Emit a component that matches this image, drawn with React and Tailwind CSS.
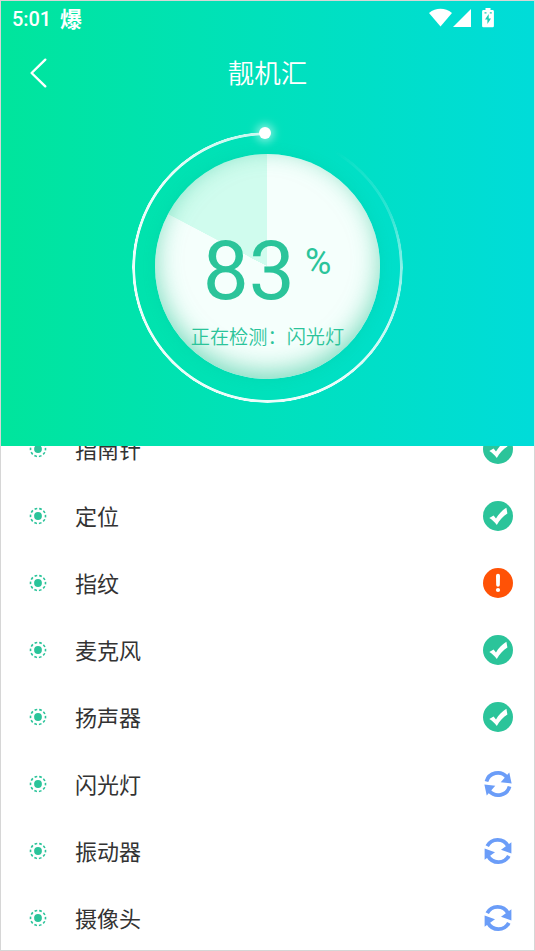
const items = [
    { name: "指南针", status: "ok" },
    { name: "定位", status: "ok" },
    { name: "指纹", status: "error" },
    { name: "麦克风", status: "ok" },
    { name: "扬声器", status: "ok" },
    { name: "闪光灯", status: "pending", angle: -12 },
    { name: "振动器", status: "pending", angle: 0 },
    { name: "摄像头", status: "pending", angle: 0 },
];

const StatusIcon = ({ status, angle }) => {
    if (status === "ok") {
        return (
            <svg viewBox="0 0 30 30" className="w-[30px] h-[30px]">
                <circle cx="15" cy="15" r="15" fill="#2bc49a" />
                <path d="M6.3 17 L10.6 14.6 L13 17.4 C15.5 13.3 19 9.3 23.4 6.8 L24.4 12.4 C20 15 16.5 19 13.8 24 C11.5 21 9 18.5 6.3 17 Z" fill="#fff" />
            </svg>
        );
    }
    if (status === "error") {
        return (
            <svg viewBox="0 0 30 30" className="w-[30px] h-[30px]">
                <circle cx="15" cy="15" r="15" fill="#ff5206" />
                <path d="M13 7.8 a2 2 0 0 1 4 0 L16.8 17 a1.8 1.8 0 0 1 -3.6 0 Z" fill="#fff" />
                <circle cx="15" cy="22" r="2.1" fill="#fff" />
            </svg>
        );
    }
    return (
        <svg viewBox="0 0 30 30" className="w-[30px] h-[30px]">
            <g transform={`rotate(${angle} 15 15)`}>
                <path d="M4.2 10.2 A11.8 11.8 0 0 1 25 10" fill="none" stroke="#6b9df8" strokeWidth="3.8" />
                <path d="M28.4 6.2 L28.4 17.4 L18 13.8 Z" fill="#6b9df8" />
                <path d="M25.8 19.8 A11.8 11.8 0 0 1 5 20" fill="none" stroke="#6b9df8" strokeWidth="3.8" />
                <path d="M1.6 23.8 L1.6 12.6 L12 16.2 Z" fill="#6b9df8" />
            </g>
        </svg>
    );
};

const Bullet = () => (
    <svg viewBox="0 0 18 18" className="w-[18px] h-[18px]">
        <circle cx="9" cy="9" r="3.9" fill="#2bc49a" />
        <circle cx="9" cy="9" r="7.5" fill="none" stroke="#2bc49a" strokeWidth="1.6" strokeDasharray="2.7 2.01" strokeDashoffset="1.35" />
    </svg>
);

const StatusBar = () => (
    <div className="flex items-center h-[34px] pl-3 pr-10 text-white">
        <span className="-ml-[1px] mt-[2px] font-['Roboto',sans-serif] text-[20px] leading-none font-medium tracking-[-0.1px]">5:01</span>
        <span className="ml-[9px] -mt-[2px] font-['Noto_Sans_CJK_SC',sans-serif] text-[22px] leading-none font-bold">爆</span>
        <svg viewBox="0 0 24 20" className="ml-auto w-6 h-5" fill="#fff">
            <path d="M0 5 C7 -0.6 16 -0.6 23 5 L11.5 18.5 Z" />
        </svg>
        <svg viewBox="0 0 19 19" className="w-[19px] h-[19px]" fill="#fff">
            <path d="M18 0 V18 H0 Z" />
        </svg>
        <svg viewBox="0 0 12 20" className="ml-[10px] w-3 h-5">
            <path d="M3.5 0 h5 v2 h2 a1.4 1.4 0 0 1 1.4 1.4 V18 a1.2 1.2 0 0 1 -1.2 1.2 H1.3 A1.2 1.2 0 0 1 0.1 18 V3.4 A1.4 1.4 0 0 1 1.5 2 h2 Z" fill="#fff" />
            <path d="M6.7 6 L3 11.5 H5.4 V16 L9 10.5 H6.7 Z M2.5 4.3 h2 v1.2 h-2 Z M7.8 4.3 h2 v1.2 h-2 Z" fill="#1bcfb4" />
        </svg>
    </div>
);

const Gauge = () => (
    <div className="relative w-[271px] h-[271px] mx-auto flex items-start justify-center pt-[22px]">
        {/* fading ring with the glowing head */}
        <div className="absolute inset-0 rounded-full bg-[conic-gradient(transparent_0deg,transparent_30deg,rgba(255,255,255,0.08)_42deg,rgba(255,255,255,0.18)_66deg,rgba(255,255,255,0.5)_86deg,rgba(255,255,255,0.75)_110deg,rgba(255,255,255,0.92)_150deg,rgba(255,255,255,0.92)_310deg,rgba(255,255,255,0.75)_360deg)] [mask:radial-gradient(circle,transparent_132px,#000_132.8px,#000_135px,transparent_135.8px)]"></div>
        <div className="absolute left-[127px] -top-[5px] w-[12px] h-[12px] rounded-full bg-white shadow-[0_0_8px_3px_rgba(255,255,255,0.5)]"></div>

        <div className="relative w-[225px] h-[225px] rounded-full overflow-hidden shadow-[0_0_12px_0px_rgba(0,190,150,0.25)] bg-[conic-gradient(#f5fffc_0deg,#f5fffc_297.6deg,#d0fcee_298deg,#d0fcee_360deg)]">
            <div className="absolute inset-0 rounded-full shadow-[inset_0_-7px_24px_rgba(43,196,150,0.6)]"></div>
            <div className="relative flex flex-col items-center pt-[76px] text-[#2bc49a]">
                <div className="flex items-start font-['Roboto',sans-serif] pr-[1px]">
                    <span className="text-[82px] leading-[82px]">83</span>
                    <span className="ml-[10px] mt-[13px] text-[36px] leading-[38px]">%</span>
                </div>
                <div className="mt-[10px] font-['Noto_Sans_CJK_SC',sans-serif] text-[19.2px] leading-[28px] font-[350] whitespace-nowrap">
                    正在检测：闪光灯
                </div>
            </div>
        </div>
    </div>
);

const App = () => {
    return (
        <div className="w-[535px] h-[951px] flex flex-col overflow-hidden bg-white border border-[#d6d6d6]">
            <header className="h-[445px] shrink-0 bg-linear-to-r from-[#00e59c] to-[#00dcd9]">
                <StatusBar />
                <div className="h-[74px] grid grid-cols-[80px_1fr_80px] items-center text-white">
                    <svg viewBox="0 0 20 30" className="ml-7 mt-[1px] w-5 h-[30px]" fill="none" stroke="#fff" strokeWidth="2.4" strokeLinecap="round" strokeLinejoin="round">
                        <path d="M16.3 1.7 L2.6 15 L16.3 28.3" />
                    </svg>
                    <h1 className="text-center font-['Noto_Sans_CJK_SC',sans-serif] text-[26.5px] leading-9 font-[350]">靓机汇</h1>
                </div>
                <div className="pt-[23px]">
                    <Gauge />
                </div>
            </header>

            <main className="flex-1 min-h-0 overflow-hidden">
                <ul className="-mt-[31px]">
                    {items.map((item) => (
                        <li key={item.name} className="h-[67px] flex items-center pl-7 pr-[21px]">
                            <Bullet />
                            <span className="ml-7 -mt-[2px] flex-1 font-['Noto_Sans_CJK_SC',sans-serif] text-[22px] leading-8 text-[#333]">
                                {item.name}
                            </span>
                            <StatusIcon status={item.status} angle={item.angle} />
                        </li>
                    ))}
                </ul>
            </main>
        </div>
    );
};

export default App;
